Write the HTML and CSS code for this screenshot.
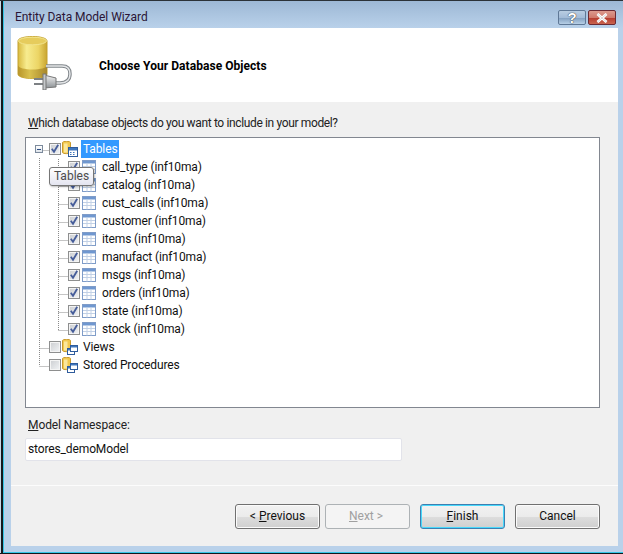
FILE: index.html
```html
<!DOCTYPE html>
<html lang="en">
<head>
<meta charset="utf-8">
<title>Entity Data Model Wizard</title>
<link rel="stylesheet" href="styles.css">
</head>
<body>
<svg class="defs" width="0" height="0">
  <defs>
    <linearGradient id="cyl" x1="0" x2="1" y1="0" y2="0">
      <stop offset="0" stop-color="#d8b93f"/><stop offset=".3" stop-color="#f7ec8f"/><stop offset=".7" stop-color="#ecd565"/><stop offset="1" stop-color="#c9a52f"/>
    </linearGradient>
    <linearGradient id="cyl2" x1="0" x2="1" y1="0" y2="0">
      <stop offset="0" stop-color="#b8952a"/><stop offset=".4" stop-color="#d9c04e"/><stop offset="1" stop-color="#a8872a"/>
    </linearGradient>
    <linearGradient id="plug" x1="0" x2="0" y1="0" y2="1">
      <stop offset="0" stop-color="#f4f4f4"/><stop offset="1" stop-color="#8d9296"/>
    </linearGradient>
    <linearGradient id="cbfill" x1="0" x2="1" y1="0" y2="1">
      <stop offset="0" stop-color="#cfd1d4"/><stop offset="1" stop-color="#eef0f2"/>
    </linearGradient>
    <symbol id="check" viewBox="0 0 12 12">
      <rect x=".5" y=".5" width="11" height="11" fill="#f4f4f4" stroke="#8e8f8f"/>
      <rect x="2" y="2" width="8" height="8" fill="url(#cbfill)"/>
      <path d="M2.800 5.800l2.200 3L9.200 1.800" fill="none" stroke="#465d9a" stroke-width="1.800"/>
    </symbol>
    <symbol id="uncheck" viewBox="0 0 12 12">
      <rect x=".5" y=".5" width="11" height="11" fill="#f4f4f4" stroke="#8e8f8f"/>
      <rect x="2" y="2" width="8" height="8" fill="url(#cbfill)"/>
    </symbol>
    <symbol id="table" viewBox="0 0 14 14">
      <rect x=".5" y=".5" width="13" height="13" fill="#fff" stroke="#7f9cc8"/>
      <rect x="1" y="1" width="12" height="2.500" fill="#6f97d0"/>
      <path d="M1 6.500h12M1 9.500h12M5 3.500v10M9 3.500v10" stroke="#c2d1e6" fill="none"/>
    </symbol>
    <symbol id="folder" viewBox="0 0 16 16">
      <path d="M.5 1.500C.5 0 8.500 0 8.500 1.500v10c0 1.500-8 1.500-8 0z" fill="#f2c94f" stroke="#c99a2c"/>
      <rect x="2" y="2.500" width="3.500" height="9" fill="#fbe79b"/>
      <rect x="6.500" y="6.500" width="9" height="9" fill="#fff" stroke="#2f5c9c"/>
      <rect x="7" y="7" width="8" height="2.500" fill="#3f76bd"/>
      <path d="M8 11.500h1.500M11 11.500h1.500M8 13.500h1.500M11 13.500h1.500" stroke="#3f76bd" fill="none"/>
    </symbol>
    <symbol id="views" viewBox="0 0 16 16">
      <path d="M.5 1.500C.5 0 8.500 0 8.500 1.500v10c0 1.500-8 1.500-8 0z" fill="#f2c94f" stroke="#c99a2c"/>
      <rect x="2" y="2.500" width="3.500" height="9" fill="#fbe79b"/>
      <rect x="5.500" y="9.500" width="7" height="6" fill="#fff" stroke="#2f5c9c"/>
      <rect x="8.500" y="6.500" width="7" height="6" fill="#fff" stroke="#2f5c9c"/>
      <rect x="9" y="7" width="6" height="1.500" fill="#3f76bd"/>
      <rect x="6" y="10" width="2.500" height="1.500" fill="#3f76bd"/>
    </symbol>
  </defs>
</svg>

<div class="window">
  <div class="titlebar">
    <span class="title">Entity Data Model Wizard</span>
    <div class="caption-buttons">
      <div class="cap cap-help">?</div>
      <div class="cap cap-close">
        <svg width="16" height="10" viewBox="0 0 16 10"><path d="M3.500 1l9 8M12.500 1l-9 8" stroke="#fff" stroke-width="2.800" fill="none"/><path d="M3.500 1l9 8M12.500 1l-9 8" stroke="#d8d8d8" stroke-width="1" fill="none"/></svg>
      </div>
    </div>
  </div>

  <div class="client">
    <header class="banner">
      <svg class="db-icon" width="56" height="54" viewBox="0 0 56 54">
        <path d="M1 5c0-6 29-6 29 0v33c0 6-29 6-29 0z" fill="url(#cyl)" stroke="#c4a12f"/>
        <path d="M1 29c0 6 29 6 29 0v9c0 6-29 6-29 0z" fill="url(#cyl2)"/>
        <ellipse cx="15.500" cy="5" rx="14" ry="3.800" fill="#e6cc5c" stroke="#f2e48c"/>
        <path d="M29 30h16c7 0 8 4 8 8 0 6-4 9-10 9h-5" fill="none" stroke="#80868b" stroke-width="3.500"/>
        <path d="M29 30h16c7 0 8 4 8 8 0 6-4 9-10 9h-5" fill="none" stroke="#e4e6e8" stroke-width="1.500"/>
        <path d="M27 39l12 3v9l-12 1z" fill="url(#plug)" stroke="#777"/>
        <path d="M17 43h10M17 48h10" stroke="#7d8184" stroke-width="2"/>
        <rect x="26" y="38" width="3" height="16" fill="#c5c8ca" stroke="#777"/>
      </svg>
      <h1 class="banner-title">Choose Your Database Objects</h1>
    </header>

    <main class="body">
      <label class="label label-tree"><u>W</u>hich database objects do you want to include in your model?</label>

      <div class="tree">
        <svg class="tree-lines" width="100" height="240" viewBox="0 0 100 240">
          <path d="M13.500 20v208M13.500 12.500h10M32.500 21v171M32.500 30.500h10M32.500 48.500h10M32.500 66.500h10M32.500 84.500h10M32.500 102.500h10M32.500 120.500h10M32.500 138.500h10M32.500 156.500h10M32.500 174.500h10M32.500 192.500h10M13.500 210.500h10M13.500 228.500h10" fill="none" stroke="#8a8a8a" stroke-dasharray="1 1"/>
        </svg>

        <div class="node root">
          <span class="expander"></span>
          <svg class="cb" width="12" height="12"><use href="#check"/></svg>
          <svg class="node-icon" width="16" height="16"><use href="#folder"/></svg>
          <span class="text selected">Tables</span>
        </div>
        <div class="node child"><svg class="cb" width="12" height="12"><use href="#check"/></svg><svg class="tbl" width="14" height="14"><use href="#table"/></svg><span class="text">call_type (inf10ma)</span></div>
        <div class="node child"><svg class="cb" width="12" height="12"><use href="#check"/></svg><svg class="tbl" width="14" height="14"><use href="#table"/></svg><span class="text">catalog (inf10ma)</span></div>
        <div class="node child"><svg class="cb" width="12" height="12"><use href="#check"/></svg><svg class="tbl" width="14" height="14"><use href="#table"/></svg><span class="text">cust_calls (inf10ma)</span></div>
        <div class="node child"><svg class="cb" width="12" height="12"><use href="#check"/></svg><svg class="tbl" width="14" height="14"><use href="#table"/></svg><span class="text">customer (inf10ma)</span></div>
        <div class="node child"><svg class="cb" width="12" height="12"><use href="#check"/></svg><svg class="tbl" width="14" height="14"><use href="#table"/></svg><span class="text">items (inf10ma)</span></div>
        <div class="node child"><svg class="cb" width="12" height="12"><use href="#check"/></svg><svg class="tbl" width="14" height="14"><use href="#table"/></svg><span class="text">manufact (inf10ma)</span></div>
        <div class="node child"><svg class="cb" width="12" height="12"><use href="#check"/></svg><svg class="tbl" width="14" height="14"><use href="#table"/></svg><span class="text">msgs (inf10ma)</span></div>
        <div class="node child"><svg class="cb" width="12" height="12"><use href="#check"/></svg><svg class="tbl" width="14" height="14"><use href="#table"/></svg><span class="text">orders (inf10ma)</span></div>
        <div class="node child"><svg class="cb" width="12" height="12"><use href="#check"/></svg><svg class="tbl" width="14" height="14"><use href="#table"/></svg><span class="text">state (inf10ma)</span></div>
        <div class="node child"><svg class="cb" width="12" height="12"><use href="#check"/></svg><svg class="tbl" width="14" height="14"><use href="#table"/></svg><span class="text">stock (inf10ma)</span></div>
        <div class="node root"><span class="expander-gap"></span><svg class="cb" width="12" height="12"><use href="#uncheck"/></svg><svg class="node-icon" width="16" height="16"><use href="#views"/></svg><span class="text">Views</span></div>
        <div class="node root"><span class="expander-gap"></span><svg class="cb" width="12" height="12"><use href="#uncheck"/></svg><svg class="node-icon" width="16" height="16"><use href="#views"/></svg><span class="text">Stored Procedures</span></div>

        <div class="tooltip">Tables</div>
      </div>

      <label class="label label-ns"><u>M</u>odel Namespace:</label>
      <div class="input">stores_demoModel</div>

      <div class="separator"></div>

      <div class="buttons">
        <button class="btn">&lt; <u>P</u>revious</button>
        <button class="btn btn-disabled"><u>N</u>ext &gt;</button>
        <button class="btn btn-default"><u>F</u>inish</button>
        <button class="btn">Cancel</button>
      </div>
    </main>
  </div>
</div>
</body>
</html>
```

FILE: styles.css
```css
* { box-sizing: border-box; }

html, body {
  margin: 0;
  padding: 0;
  height: 100%;
  background: #fff;
}

body {
  font-family: Roboto, "Open Sans", sans-serif;
  font-size: 12px;
  color: #111;
  overflow: hidden;
}

.defs { position: absolute; }

.window {
  width: 623px;
  height: 554px;
  display: flex;
  flex-direction: column;
  padding: 0 5px 1px 4px;
  background: #b9d1ea;
  border-top: 1px solid #2b3238;
  border-bottom: 1px solid #10181c;
  box-shadow: inset 1px 0 0 #c9d8e6, inset 3px 0 0 #14191d, inset 4px 0 0 #35c6e6, inset 0 -1px 0 #35c6e6;
}

.titlebar {
  flex: none;
  height: 27px;
  margin: 0 -5px 0 0;
  padding: 9px 7px 0 11px;
  display: flex;
  justify-content: space-between;
  background: linear-gradient(#9db8d5, #b9d1ea);
}

.title {
  font-size: 12px;
  line-height: 17px;
  color: #2a1535;
  margin-top: -1px;
  letter-spacing: -0.05px;
}

.caption-buttons { display: flex; gap: 2px; }

.cap {
  width: 28px;
  height: 15px;
  border-radius: 2px;
  display: flex;
  align-items: center;
  justify-content: center;
}

.cap-help {
  border: 1px solid #5f7896;
  background: linear-gradient(#b9cde2 0, #a3bcd8 50%, #7f9dbe 51%, #b7cfe6 100%);
  color: #fff;
  font: bold 15px/13px "Liberation Sans", sans-serif;
  text-shadow: 0 0 1px #333, 0 0 1px #333;
}

.cap-close {
  border: 1px solid #6b2a33;
  background: linear-gradient(#dc9a8e 0, #d07a6c 50%, #b53a2d 51%, #c9644f 100%);
}

.client {
  flex: 1;
  margin: 0 0 6px 7px;
  display: flex;
  flex-direction: column;
  background: #f0f0f0;
}

.banner {
  flex: none;
  height: 74px;
  background: #fff;
  display: flex;
  align-items: flex-start;
}

.db-icon { margin: 8px 0 0 6px; }

.banner-title {
  margin: 30px 0 0 26px;
  font-size: 12px;
  line-height: 16px;
  font-weight: 700;
  letter-spacing: 0.05px;
  color: #000;
}

.body {
  flex: 1;
  display: flex;
  flex-direction: column;
  padding: 13px 18px 0 14px;
}

.label {
  display: block;
  line-height: 16px;
  padding-left: 3px;
  color: #222;
}

.label-tree { height: 22px; letter-spacing: -0.36px; }

.tree {
  position: relative;
  width: 575px;
  height: 271px;
  padding-top: 2px;
  background: #fff;
  border: 1px solid #828790;
}

.tree-lines {
  position: absolute;
  left: 0;
  top: 0;
  pointer-events: none;
}

.node {
  position: relative;
  display: flex;
  align-items: center;
  height: 18px;
}

.root { padding-left: 9px; }
.child { padding-left: 42px; }

.expander, .expander-gap {
  width: 8px;
  height: 8px;
  margin-right: 6px;
  flex: none;
}

.expander {
  border: 1px solid #7c8a9c;
  background: linear-gradient(90deg, transparent 1px, #2f4f85 1px, #2f4f85 5px, transparent 5px) center / 100% 1px no-repeat, linear-gradient(#fff, #dfe5ec);
}

.cb { flex: none; display: block; }

.node-icon { flex: none; margin-left: 1px; }

.tbl { flex: none; margin-left: 2px; }

.text { letter-spacing: -0.13px; }

.root .text { margin-left: 3px; padding: 0 2px; line-height: 18px; }

.child .text { margin-left: 6px; line-height: 18px; }

.selected {
  background: #3399ff;
  color: #fff;
}

.tooltip {
  position: absolute;
  left: 23px;
  top: 29px;
  width: 45px;
  height: 19px;
  line-height: 17px;
  text-align: center;
  border: 1px solid #767676;
  border-radius: 3px;
  color: #4c4c4c;
  background: linear-gradient(#fff, #e4e5f0);
  box-shadow: 1px 1px 2px rgba(0,0,0,.25);
}

.label-ns { margin-top: 9px; height: 21px; letter-spacing: -0.1px; }

.input {
  width: 377px;
  height: 23px;
  line-height: 21px;
  padding-left: 2px;
  background: #fff;
  border: 1px solid #e2e3ea;
  border-radius: 2px;
  color: #111;
  letter-spacing: -0.13px;
}

.separator {
  margin: 24px -18px 0 -14px;
  height: 1px;
  background: #fcfcfc;
}

.buttons {
  margin-top: 18px;
  display: flex;
  justify-content: flex-end;
}

.btn {
  width: 85px;
  height: 25px;
  margin-left: 5px;
  padding: 0 0 2px;
  font: inherit;
  color: #111;
  border: 1px solid #707070;
  border-radius: 3px;
  background: linear-gradient(#f2f2f2 0, #ebebeb 50%, #dddddd 51%, #cfcfcf 100%);
  box-shadow: inset 0 0 0 1px #fbfbfb;
}

.btn-disabled {
  padding-right: 3px;
  color: #a0a0a0;
  border-color: #adb2b5;
  background: #f4f4f4;
  box-shadow: none;
}

.btn-default {
  margin-left: 10px;
  border-color: #3c7fb1;
  box-shadow: inset 0 0 0 1px #48d8fb;
}

.btn-default + .btn { margin-left: 10px; }
```
